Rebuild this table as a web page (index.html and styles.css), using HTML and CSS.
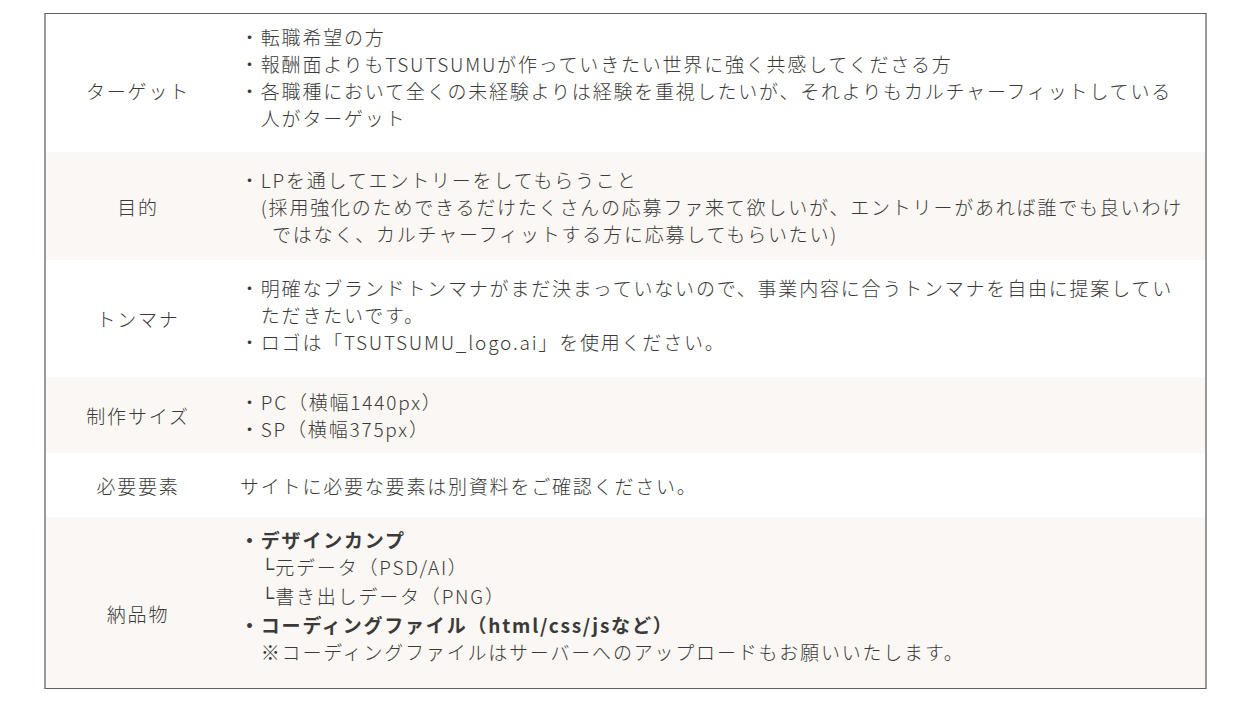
FILE: index.html
```html
<!DOCTYPE html>
<html lang="ja">
<head>
<meta charset="utf-8">
<title>制作概要</title>
<link rel="stylesheet" href="styles.css">
</head>
<body>
<div class="spec">
  <div class="row row-target">
    <div class="label">ターゲット</div>
    <div class="body">
      <div class="line">・転職希望の方</div>
      <div class="line">・報酬面よりもTSUTSUMUが作っていきたい世界に強く共感してくださる方</div>
      <div class="line">・各職種において全くの未経験よりは経験を重視したいが、それよりもカルチャーフィットしている</div>
      <div class="line indent">人がターゲット</div>
    </div>
  </div>
  <div class="row row-purpose alt">
    <div class="label">目的</div>
    <div class="body">
      <div class="line">・LPを通してエントリーをしてもらうこと</div>
      <div class="line indent">(採用強化のためできるだけたくさんの応募ファ来て欲しいが、エントリーがあれば誰でも良いわけ</div>
      <div class="line indent-wide">ではなく、カルチャーフィットする方に応募してもらいたい)</div>
    </div>
  </div>
  <div class="row row-tone">
    <div class="label">トンマナ</div>
    <div class="body">
      <div class="line">・明確なブランドトンマナがまだ決まっていないので、事業内容に合うトンマナを自由に提案してい</div>
      <div class="line indent">ただきたいです。</div>
      <div class="line">・ロゴは「TSUTSUMU_logo.ai」を使用ください。</div>
    </div>
  </div>
  <div class="row row-size alt">
    <div class="label">制作サイズ</div>
    <div class="body">
      <div class="line">・PC（横幅1440px）</div>
      <div class="line">・SP（横幅375px）</div>
    </div>
  </div>
  <div class="row row-elements">
    <div class="label">必要要素</div>
    <div class="body">
      <div class="line">サイトに必要な要素は別資料をご確認ください。</div>
    </div>
  </div>
  <div class="row row-deliver alt">
    <div class="label">納品物</div>
    <div class="body">
      <div class="line strong">・デザインカンプ</div>
      <div class="line indent"><span class="corner">└</span>元データ（PSD/AI）</div>
      <div class="line indent"><span class="corner">└</span>書き出しデータ（PNG）</div>
      <div class="line strong">・コーディングファイル（html/css/jsなど）</div>
      <div class="line indent">※コーディングファイルはサーバーへのアップロードもお願いいたします。</div>
    </div>
  </div>
</div>
</body>
</html>
```

FILE: styles.css
```css
html, body {
  margin: 0;
  padding: 0;
  background: #ffffff;
}

body {
  font-family: "Noto Sans CJK JP", "Noto Sans", sans-serif;
  font-size: 19px;
  font-weight: 300;
  letter-spacing: 1.8px;
  color: #3a3a3a;
}

.spec {
  box-sizing: border-box;
  width: 1163px;
  margin: 13px 0 0 44px;
  border-top: 1px solid #5f5f5f;
  border-bottom: 1px solid #5f5f5f;
  border-left: 2px solid #9a9a9a;
  border-right: 2px solid #9a9a9a;
  display: flex;
  flex-direction: column;
}

.row {
  display: grid;
  grid-template-columns: 184px 1fr;
  align-items: center;
  background: #ffffff;
}

.row.alt {
  background: #faf7f4;
}

.row-target { height: 138px; }
.row-purpose { height: 108px; }
.row-tone { height: 117px; }
.row-size { height: 76px; }
.row-elements { height: 64px; }
.row-deliver { height: 171px; }

.label {
  text-align: center;
  line-height: 27px;
}

.body {
  padding-left: 10px;
  line-height: 27px;
}

.row-target .label { padding-top: 14px; }
.row-target .body { padding-bottom: 12px; }
.row-tone .body { padding-bottom: 8px; }
.row-deliver .label { padding-top: 22px; }
.row-deliver .body { padding-bottom: 14px; }

.line {
  white-space: nowrap;
}

.line.indent {
  padding-left: 20.8px;
}

.line.indent-wide {
  padding-left: 32px;
}

.line.strong {
  font-weight: 700;
}

.corner {
  font-family: "DejaVu Sans", sans-serif;
  letter-spacing: 0;
  margin-right: 1px;
}
```
